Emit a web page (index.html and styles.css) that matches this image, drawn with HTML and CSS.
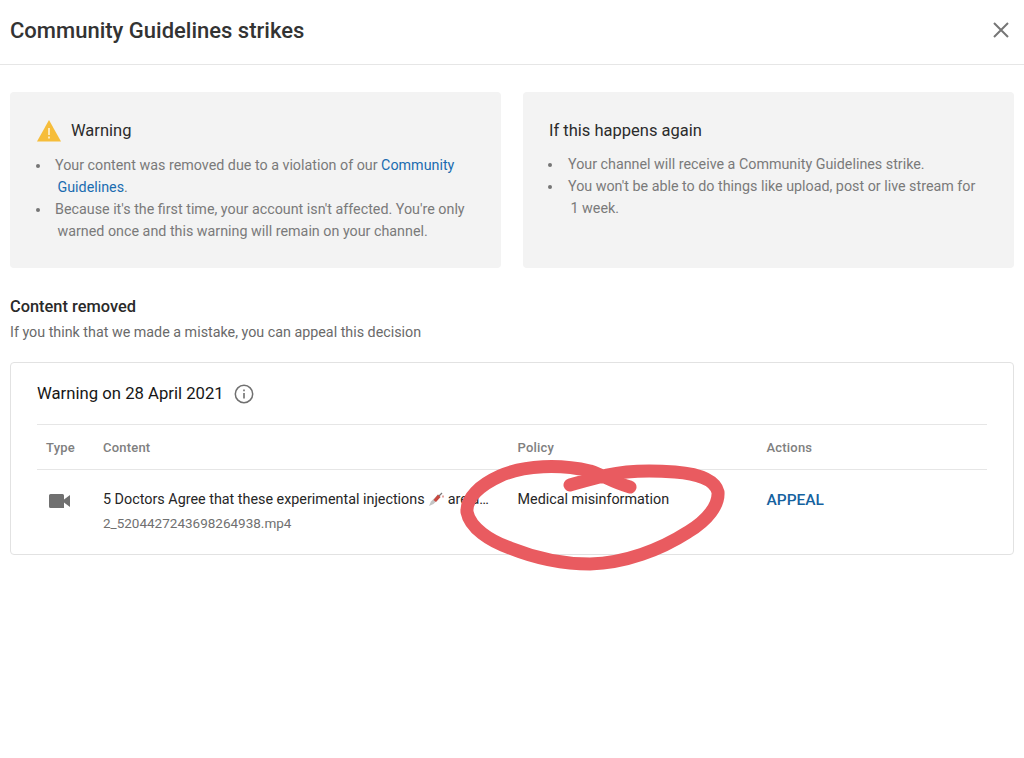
FILE: index.html
```html
<!DOCTYPE html>
<html lang="en">
<head>
<meta charset="utf-8">
<title>Community Guidelines strikes</title>
<link rel="stylesheet" href="styles.css">
</head>
<body>
<header class="topbar">
  <h1 class="title">Community Guidelines strikes</h1>
  <svg class="close" viewBox="0 0 16 16" width="16" height="16"><path d="M1 1 15 15M15 1 1 15" fill="none" stroke="#767676" stroke-width="2"/></svg>
</header>
<main class="main">
  <section class="cards">
    <div class="card">
      <div class="card-head">
        <svg class="warn" viewBox="0 0 24 22" width="24" height="22"><path d="M12 0 24 21.500H0Z" fill="#f6bd3a"/><path d="M11 8h2v7h-2zM11 16.500h2v2h-2z" fill="#fde9b8"/></svg>
        <h2 class="card-title">Warning</h2>
      </div>
      <ul class="notes">
        <li><span class="lead">Your content was removed due to a violation of our <a class="link">Community</a></span><span class="cont"><a class="link">Guidelines</a>.</span></li>
        <li><span class="lead">Because it's the first time, your account isn't affected. You're only</span><span class="cont">warned once and this warning will remain on your channel.</span></li>
      </ul>
    </div>
    <div class="card card-again">
      <h2 class="card-title again-title">If this happens again</h2>
      <ul class="notes notes-again">
        <li><span class="lead">Your channel will receive a Community Guidelines strike.</span></li>
        <li><span class="lead">You won't be able to do things like upload, post or live stream for</span><span class="cont">1 week.</span></li>
      </ul>
    </div>
  </section>
  <h2 class="section-title">Content removed</h2>
  <p class="section-sub">If you think that we made a mistake, you can appeal this decision</p>
  <section class="panel">
    <div class="panel-head">
      <span class="panel-title">Warning on 28 April 2021</span>
      <svg class="info" viewBox="0 0 20 20" width="20" height="20"><circle cx="10" cy="10" r="8.700" fill="none" stroke="#707070" stroke-width="1.500"/><path d="M9.200 9h1.600v5.500H9.200zM9.200 5.600h1.600v1.700H9.200z" fill="#707070"/></svg>
    </div>
    <div class="row row-head">
      <span class="col-type">Type</span>
      <span class="col-content">Content</span>
      <span class="col-policy">Policy</span>
      <span class="col-actions">Actions</span>
    </div>
    <div class="row row-body">
      <span class="col-type">
        <svg class="video" viewBox="0 0 21 14" width="21" height="14"><path d="M0 1.500Q0 0 1.500 0H13.500Q15 0 15 1.500V14H1.500Q0 14 0 12.500ZM15 5.500 21 1V13L15 8.500Z" fill="#707070"/></svg>
      </span>
      <div class="col-content">
        <div class="video-title">5 Doctors Agree that these experimental injections <svg class="syringe" viewBox="0 0 16 16" width="16" height="16"><path d="M1 15 3 10.500 10 3.500 12.500 6 5.500 13Z" fill="#c4c4c4"/><path d="M5.500 9 10 3.500 12.500 6 8 11Z" fill="#c9483f"/><path d="M11 5 14 2" stroke="#777" stroke-width="1.300"/><path d="M15 4.500v2" stroke="#c9483f" stroke-width="1"/></svg> are a…</div>
        <div class="file-name">2_5204427243698264938.mp4</div>
      </div>
      <span class="col-policy">Medical misinformation</span>
      <a class="col-actions appeal">APPEAL</a>
    </div>
  </section>
</main>
<svg class="scribble" viewBox="0 0 1024 758" width="1024" height="758"><path d="M630 487C612 482 605 476 590 471C560 464 525 465 500 476C480 485 466 498 467 512C470 528 490 541 510 548C535 558 560 564 590 564C625 563 660 550 688 532C708 520 719 505 718 492C715 480 700 474 675 472C650 470 625 471 607 475C592 479 580 482 570 485" fill="none" stroke="#e95b60" stroke-width="13" stroke-linecap="round" stroke-linejoin="round"/></svg>
</body>
</html>
```
FILE: styles.css
```css
* { box-sizing: border-box; }
html, body { margin: 0; padding: 0; }
body {
  position: relative;
  width: 1024px;
  height: 758px;
  overflow: hidden;
  background: #fff;
  font-family: Roboto, "Liberation Sans", sans-serif;
  color: #1b1b1b;
}
.topbar {
  height: 65px;
  display: flex;
  align-items: center;
  justify-content: space-between;
  padding: 0 15px 5px 10px;
  border-bottom: 1px solid #e6e6e6;
}
.title { margin: 0; padding-top: 2px; font-size: 22px; font-weight: 500; color: #333; }
.main { padding: 27px 10px 0; }
.cards { display: flex; gap: 22px; }
.card {
  flex: 1 1 0;
  min-width: 0;
  height: 176px;
  padding: 28px 20px 0 27px;
  background: #f3f3f3;
  border-radius: 4px;
}
.card-head { display: flex; align-items: center; gap: 10px; }
.warn { flex: none; }
.card-title { margin: 0; font-size: 16.500px; font-weight: 400; color: #2b2b2b; line-height: 22px; }
.notes {
  margin: 12px 0 0;
  padding: 0;
  list-style: none;
  font-size: 14.300px;
  line-height: 22px;
  color: #7a7a7a;
}
.notes li { position: relative; padding-left: 18px; }
.notes li::before {
  content: "";
  position: absolute;
  left: -1px;
  top: 10px;
  width: 4px;
  height: 4px;
  border-radius: 50%;
  background: #757575;
}
.lead, .cont { display: block; white-space: nowrap; }
.cont { padding-left: 2.500px; }
.link { color: #1a6cb0; }
.card-again { padding-left: 26px; padding-right: 21px; }
.notes-again { margin-top: 11px; }
.notes-again li { padding-left: 19px; }
.section-title { margin: 29px 0 0; font-size: 16.400px; font-weight: 500; line-height: 20px; color: #2a2a2a; }
.section-sub { margin: 5px 0 0; font-size: 14.300px; line-height: 20px; color: #6a6a6a; }
.panel {
  margin-top: 20px;
  height: 193px;
  padding: 0 26px;
  border: 1px solid #e2e2e2;
  border-radius: 4px;
}
.panel-head {
  height: 62px;
  display: flex;
  align-items: center;
  gap: 10px;
  border-bottom: 1px solid #e6e6e6;
}
.panel-title { font-size: 16.700px; color: #161616; }
.row { display: flex; }
.row-head {
  height: 45px;
  padding-top: 1px;
  align-items: center;
  border-bottom: 1px solid #e6e6e6;
  font-size: 13px;
  line-height: 20px;
  font-weight: 500;
  letter-spacing: .2px;
  color: #808080;
}
.row-body { padding-top: 20px; font-size: 14.350px; color: #262626; }
.col-type { flex: none; width: 66px; padding-left: 9px; }
.col-content { flex: none; width: 414.500px; }
.col-policy { flex: none; width: 249px; line-height: 20px; }
.col-actions { flex: none; }
.video { display: block; margin: 4px 0 0 3px; }
.video-title { line-height: 20px; white-space: nowrap; }
.syringe { vertical-align: -3px; }
.file-name { margin-top: 4px; font-size: 13.500px; line-height: 18px; color: #707070; }
.appeal { font-size: 15.500px; font-weight: 500; line-height: 20px; color: #15629f; }
.scribble { position: absolute; left: 0; top: 0; pointer-events: none; }
```
